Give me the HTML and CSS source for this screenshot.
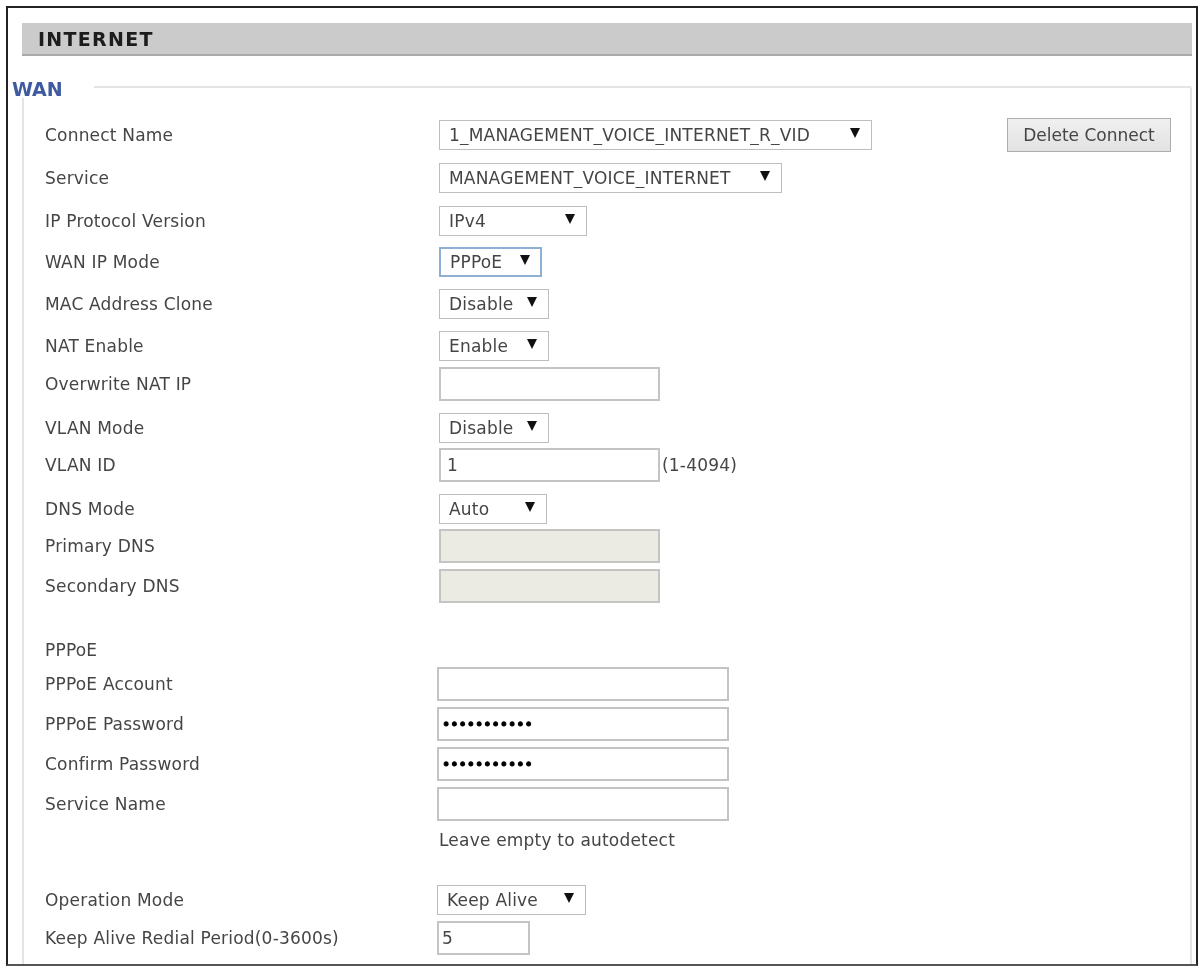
FILE: index.html
```html
<!DOCTYPE html>
<html lang="en">
<head>
<meta charset="utf-8">
<title>INTERNET</title>
<link rel="stylesheet" href="styles.css">
</head>
<body>
<main class="frame">
  <h1 class="bar">INTERNET</h1>
  <fieldset class="wan">
    <legend>WAN</legend>
    <div class="row gap-11 first">
      <label>Connect Name</label>
      <span class="pick w-433"><select><option>1_MANAGEMENT_VOICE_INTERNET_R_VID</option></select></span>
      <button type="button">Delete Connect</button>
    </div>
    <div class="row gap-13">
      <label>Service</label>
      <span class="pick w-343"><select><option>MANAGEMENT_VOICE_INTERNET</option></select></span>
    </div>
    <div class="row gap-11">
      <label>IP Protocol Version</label>
      <span class="pick w-148"><select><option>IPv4</option></select></span>
    </div>
    <div class="row gap-12">
      <label>WAN IP Mode</label>
      <span class="pick w-103 focus"><select><option>PPPoE</option></select></span>
    </div>
    <div class="row gap-12">
      <label>MAC Address Clone</label>
      <span class="pick w-110"><select><option>Disable</option></select></span>
    </div>
    <div class="row gap-6">
      <label>NAT Enable</label>
      <span class="pick w-110"><select><option>Enable</option></select></span>
    </div>
    <div class="row gap-12">
      <label>Overwrite NAT IP</label>
      <input class="w-221" type="text">
    </div>
    <div class="row gap-5">
      <label>VLAN Mode</label>
      <span class="pick w-110"><select><option>Disable</option></select></span>
    </div>
    <div class="row gap-12">
      <label>VLAN ID</label>
      <input class="w-221" type="text" value="1">
      <span class="unit">(1-4094)</span>
    </div>
    <div class="row gap-5">
      <label>DNS Mode</label>
      <span class="pick w-108"><select><option>Auto</option></select></span>
    </div>
    <div class="row gap-6">
      <label>Primary DNS</label>
      <input class="w-221" type="text" disabled>
    </div>
    <div class="row">
      <label>Secondary DNS</label>
      <input class="w-221" type="text" disabled>
    </div>
    <div class="heading">PPPoE</div>
    <div class="row gap-6 wide">
      <label>PPPoE Account</label>
      <input class="w-292" type="text">
    </div>
    <div class="row gap-6 wide">
      <label>PPPoE Password</label>
      <input class="w-292 secret" type="password" value="12345678901">
    </div>
    <div class="row gap-6 wide">
      <label>Confirm Password</label>
      <input class="w-292 secret" type="password" value="12345678901">
    </div>
    <div class="row wide">
      <label>Service Name</label>
      <input class="w-292" type="text">
    </div>
    <div class="hint">Leave empty to autodetect</div>
    <div class="row gap-6 wide">
      <label>Operation Mode</label>
      <span class="pick w-149"><select><option>Keep Alive</option></select></span>
    </div>
    <div class="row wide">
      <label>Keep Alive Redial Period(0-3600s)</label>
      <input class="w-93 tight" type="text" value="5">
    </div>
  </fieldset>
</main>
</body>
</html>
```
FILE: styles.css
```css
* { box-sizing: border-box; }
html, body { margin: 0; background: #fff; }
body { padding: 6px 3px 0 6px; font-family: "DejaVu Sans", sans-serif; font-size: 17px; letter-spacing: 0.2px; color: #454545; }
.frame {
  height: 960px;
  border: 2px solid #222;
  border-bottom-color: #555;
  padding: 15px 4px 0 14px;
  overflow: hidden;
  filter: blur(0.5px);
}
.bar {
  margin: 0;
  height: 33px;
  padding-left: 16px;
  background: #cbcbcb;
  border-bottom: 2px solid #aaa;
  font: bold 19px/32px "DejaVu Sans", sans-serif;
  letter-spacing: 1.3px;
  color: #1c1c1c;
}
.wan {
  margin: 20px 0 0;
  padding: 0;
  min-width: 0;
  border: 2px solid #e4e4e4;
  border-bottom: 0;
  border-radius: 3px 3px 0 0;
  height: 900px;
}
.wan legend {
  margin-left: -12px;
  padding: 4px 31px 0 0;
  font: bold 19px/18px "DejaVu Sans", sans-serif;
  letter-spacing: 0;
  color: #3f5a9e;
}
.row { display: flex; align-items: center; padding-left: 21px; }
.row.first { margin-top: 20px; }
.row label { flex: 0 0 394px; }
.row.wide label { flex-basis: 392px; }
.gap-5 { margin-bottom: 5px; }
.gap-6 { margin-bottom: 6px; }
.gap-11 { margin-bottom: 11px; }
.gap-12 { margin-bottom: 12px; }
.gap-13 { margin-bottom: 13px; }
.pick { position: relative; display: block; height: 30px; }
.pick select {
  appearance: none;
  width: 100%;
  height: 100%;
  padding: 0 0 0 9px;
  border: 1px solid #bdbdbd;
  border-radius: 0;
  background: #fff;
  color: #454545;
  font: 17px "DejaVu Sans", sans-serif;
  letter-spacing: 0.2px;
}
.pick::after {
  content: "";
  position: absolute;
  right: 12px;
  top: 8px;
  border-style: solid;
  border-width: 10px 5px 0;
  border-color: #111 transparent transparent;
}
.pick.focus select { border: 2px solid #8fb0d6; }
.w-93 { width: 93px; }
.w-103 { width: 103px; }
.w-108 { width: 108px; }
.w-110 { width: 110px; }
.w-148 { width: 148px; }
.w-149 { width: 149px; }
.w-221 { width: 221px; }
.w-292 { width: 292px; }
.w-343 { width: 343px; }
.w-433 { width: 433px; }
input {
  height: 34px;
  padding: 0 6px;
  border: 2px solid #c4c4c4;
  background: #fff;
  color: #454545;
  font: 17px "DejaVu Sans", sans-serif;
}
input:disabled { background: #ebebe4; }
input.secret { padding: 0 3px; color: #000; font-size: 14px; -webkit-text-stroke: 1px #000; }
input.tight { padding: 0 3px; }
.unit { margin-left: 2px; }
button {
  height: 34px;
  width: 164px;
  margin-left: 135px;
  padding: 0;
  border: 1px solid #adadad;
  background: linear-gradient(#f0f0f0, #e2e2e2);
  color: #454545;
  font: 17px "DejaVu Sans", sans-serif;
}
.heading { padding: 36px 0 0 21px; height: 64px; line-height: 22px; }
.hint { margin-left: 415px; height: 64px; line-height: 38px; }
```
